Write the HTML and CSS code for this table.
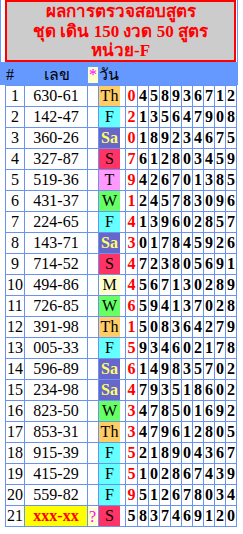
FILE: index.html
```html
<!DOCTYPE html>
<html lang="th">
<head>
<meta charset="utf-8">
<title>ผลการตรวจสอบสูตร</title>
<link rel="stylesheet" href="styles.css">
</head>
<body>
<div class="sheet">
  <div class="title-wrap">
    <div class="title">
      <div>ผลการตรวจสอบสูตร</div>
      <div>ชุด เดิน 150 งวด 50 สูตร</div>
      <div>หน่วย-F</div>
    </div>
  </div>
  <div class="head-row">
    <span class="h-num">#</span>
    <span class="h-lek">เลข</span>
    <span class="h-star"><span class="mark">*</span></span>
    <span class="h-day">วัน</span>
  </div>
</div>
<table class="grid">
  <colgroup>
    <col class="c-no"><col class="c-lek"><col class="c-q"><col class="c-day"><col class="c-d1">
    <col class="c-d"><col class="c-d"><col class="c-d"><col class="c-d"><col class="c-d"><col class="c-d"><col class="c-d"><col class="c-d"><col class="c-d">
  </colgroup>
  <tbody>
    <tr><td>1</td><td>630-61</td><td></td><td class="day"><span class="th">Th</span></td><td class="red">0</td><td>4</td><td>5</td><td>8</td><td>9</td><td>3</td><td>6</td><td>7</td><td>1</td><td>2</td></tr>
    <tr><td>2</td><td>142-47</td><td></td><td class="day"><span class="fr">F</span></td><td class="red">2</td><td>1</td><td>3</td><td>5</td><td>6</td><td>4</td><td>7</td><td>9</td><td>0</td><td>8</td></tr>
    <tr><td>3</td><td>360-26</td><td></td><td class="day"><span class="sa">Sa</span></td><td class="red">0</td><td>1</td><td>8</td><td>9</td><td>2</td><td>3</td><td>4</td><td>6</td><td>7</td><td>5</td></tr>
    <tr><td>4</td><td>327-87</td><td></td><td class="day"><span class="su">S</span></td><td class="red">7</td><td>6</td><td>1</td><td>2</td><td>8</td><td>0</td><td>3</td><td>4</td><td>5</td><td>9</td></tr>
    <tr><td>5</td><td>519-36</td><td></td><td class="day"><span class="tu">T</span></td><td class="red">9</td><td>4</td><td>2</td><td>6</td><td>7</td><td>0</td><td>1</td><td>3</td><td>8</td><td>5</td></tr>
    <tr><td>6</td><td>431-37</td><td></td><td class="day"><span class="we">W</span></td><td class="red">1</td><td>2</td><td>4</td><td>5</td><td>7</td><td>8</td><td>3</td><td>0</td><td>9</td><td>6</td></tr>
    <tr><td>7</td><td>224-65</td><td></td><td class="day"><span class="fr">F</span></td><td class="red">4</td><td>1</td><td>3</td><td>9</td><td>6</td><td>0</td><td>2</td><td>8</td><td>5</td><td>7</td></tr>
    <tr><td>8</td><td>143-71</td><td></td><td class="day"><span class="sa">Sa</span></td><td class="red">3</td><td>0</td><td>1</td><td>7</td><td>8</td><td>4</td><td>5</td><td>9</td><td>2</td><td>6</td></tr>
    <tr><td>9</td><td>714-52</td><td></td><td class="day"><span class="su">S</span></td><td class="red">4</td><td>7</td><td>2</td><td>3</td><td>8</td><td>0</td><td>5</td><td>6</td><td>9</td><td>1</td></tr>
    <tr><td>10</td><td>494-86</td><td></td><td class="day"><span class="mo">M</span></td><td class="red">4</td><td>5</td><td>6</td><td>7</td><td>1</td><td>3</td><td>0</td><td>2</td><td>8</td><td>9</td></tr>
    <tr><td>11</td><td>726-85</td><td></td><td class="day"><span class="we">W</span></td><td class="red">6</td><td>5</td><td>9</td><td>4</td><td>1</td><td>3</td><td>7</td><td>0</td><td>2</td><td>8</td></tr>
    <tr><td>12</td><td>391-98</td><td></td><td class="day"><span class="th">Th</span></td><td class="red">1</td><td>5</td><td>0</td><td>8</td><td>3</td><td>6</td><td>4</td><td>2</td><td>7</td><td>9</td></tr>
    <tr><td>13</td><td>005-33</td><td></td><td class="day"><span class="fr">F</span></td><td class="red">5</td><td>9</td><td>3</td><td>4</td><td>6</td><td>0</td><td>2</td><td>1</td><td>7</td><td>8</td></tr>
    <tr><td>14</td><td>596-89</td><td></td><td class="day"><span class="sa">Sa</span></td><td class="red">6</td><td>1</td><td>4</td><td>9</td><td>8</td><td>3</td><td>5</td><td>7</td><td>0</td><td>2</td></tr>
    <tr><td>15</td><td>234-98</td><td></td><td class="day"><span class="sa">Sa</span></td><td class="red">4</td><td>7</td><td>9</td><td>3</td><td>5</td><td>1</td><td>8</td><td>6</td><td>0</td><td>2</td></tr>
    <tr><td>16</td><td>823-50</td><td></td><td class="day"><span class="we">W</span></td><td class="red">3</td><td>4</td><td>7</td><td>8</td><td>5</td><td>0</td><td>1</td><td>6</td><td>9</td><td>2</td></tr>
    <tr><td>17</td><td>853-31</td><td></td><td class="day"><span class="th">Th</span></td><td class="red">3</td><td>4</td><td>7</td><td>9</td><td>6</td><td>1</td><td>2</td><td>8</td><td>0</td><td>5</td></tr>
    <tr><td>18</td><td>915-39</td><td></td><td class="day"><span class="fr">F</span></td><td class="red">5</td><td>2</td><td>1</td><td>8</td><td>9</td><td>0</td><td>4</td><td>3</td><td>6</td><td>7</td></tr>
    <tr><td>19</td><td>415-29</td><td></td><td class="day"><span class="fr">F</span></td><td class="red">5</td><td>1</td><td>0</td><td>2</td><td>8</td><td>6</td><td>7</td><td>4</td><td>3</td><td>9</td></tr>
    <tr><td>20</td><td>559-82</td><td></td><td class="day"><span class="fr">F</span></td><td class="red">9</td><td>5</td><td>1</td><td>2</td><td>6</td><td>7</td><td>8</td><td>0</td><td>3</td><td>4</td></tr>
    <tr><td>21</td><td class="next">xxx-xx</td><td class="q"><span class="mark">?</span></td><td class="day"><span class="su">S</span></td><td>5</td><td>8</td><td>3</td><td>7</td><td>4</td><td>6</td><td>9</td><td>1</td><td>2</td><td>0</td></tr>
  </tbody>
</table>
</body>
</html>
```
FILE: styles.css
```css
html, body {
  margin: 0;
  padding: 0;
  background: #ffffff;
}
body {
  font-family: "Liberation Serif", serif;
  font-size: 16px;
  color: #000000;
}
.sheet {
  width: 238px;
}
.title-wrap {
  border-left: 1px solid #6699ff;
  border-right: 1px solid #6699ff;
  padding: 0 1px 0 4px;
}
.title {
  box-sizing: border-box;
  height: 62px;
  border: 2px solid #ff0000;
  background: #cccccc;
  color: #ff0000;
  font-weight: bold;
  font-size: 17px;
  line-height: 19.5px;
  text-align: center;
  padding-top: 0;
}
.head-row {
  display: grid;
  grid-template-columns: 19px 63px 11px 1fr;
  height: 23px;
  align-items: center;
  padding-left: 6px;
  background: #6699ff;
  font-size: 16px;
}
.h-lek {
  text-align: center;
}
.mark {
  display: inline-block;
  background: #ffffcc;
  color: #ff00ff;
  line-height: 16px;
  padding: 0 1px;
}
.grid {
  margin-left: 5px;
  width: 232px;
  table-layout: fixed;
  border-collapse: separate;
  border-spacing: 1px;
  background: #6a93f0;
}
.c-no { width: 18px; }
.c-lek { width: 62px; }
.c-q { width: 10px; }
.c-day { width: 26px; }
.c-d1 { width: 11px; }
.c-d { width: 10px; }
.grid td {
  background: #ffffff;
  padding: 0;
  height: 20px;
  line-height: 20px;
  text-align: center;
  white-space: nowrap;
  overflow: hidden;
}
.grid td:nth-child(n+5) {
  font-weight: bold;
}
.grid td.red {
  color: #ff0000;
}
.grid td.day {
  text-align: left;
}
.grid td.q {
  text-align: left;
}
.grid td.q .mark {
  line-height: 18px;
  vertical-align: middle;
}
.grid td.next {
  background: #ffff00;
  color: #ff0000;
  font-weight: bold;
}
.day span {
  display: block;
  width: 21px;
  height: 20px;
  text-align: center;
}
.th { background: #ffcc66; }
.fr { background: #66ffff; }
.sa { background: #6666cc; color: #ffff66; font-weight: bold; }
.su { background: #ff3366; }
.tu { background: #ff99ff; }
.we { background: #66ff66; }
.mo { background: #ffffcc; }
```
